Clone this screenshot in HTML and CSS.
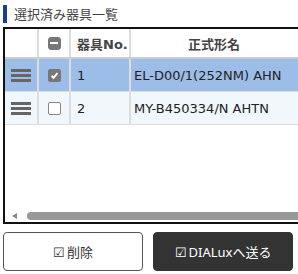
FILE: index.html
```html
<!DOCTYPE html>
<html lang="ja">
<head>
    <meta charset="UTF-8">
    <title>選択済み器具一覧</title>
    <link rel="stylesheet" href="styles.css">
</head>
<body>
    <div class="panel">
        <div class="panel-title">選択済み器具一覧</div>
        <div class="grid-box">
            <div class="grid-row grid-head">
                <div class="cell c-drag"></div>
                <div class="cell c-check"><span class="box partial"></span></div>
                <div class="cell c-no">器具No.</div>
                <div class="cell c-name head-name">正式形名</div>
            </div>
            <div class="grid-row selected">
                <div class="cell c-drag"><span class="handle"></span></div>
                <div class="cell c-check"><span class="box checked">
                    <svg width="13" height="13" viewBox="0 0 13 13"><path d="M3 6.8 L5.4 9.2 L10 3.8" fill="none" stroke="#fff" stroke-width="2.2"/></svg>
                </span></div>
                <div class="cell c-no">1</div>
                <div class="cell c-name">EL-D00/1(252NM) AHN</div>
            </div>
            <div class="grid-row">
                <div class="cell c-drag"><span class="handle"></span></div>
                <div class="cell c-check"><span class="box"></span></div>
                <div class="cell c-no">2</div>
                <div class="cell c-name">MY-B450334/N AHTN</div>
            </div>
            <div class="grid-fill"></div>
            <div class="hscroll">
                <span class="arrow-left"></span>
                <span class="thumb"></span>
            </div>
        </div>
        <div class="actions">
            <button class="btn btn-light"><span class="ico">☑</span>削除</button>
            <button class="btn btn-dark"><span class="ico">☑</span>DIALuxへ送る</button>
        </div>
    </div>
</body>
</html>
```

FILE: styles.css
```css
body {
    margin: 0;
    padding: 0;
    font-family: "Noto Sans", "Noto Sans CJK JP", sans-serif;
    color: #333;
    background-color: white;
    overflow: hidden;
}
.panel {
    width: 298px;
    height: 274px;
    display: flex;
    flex-direction: column;
    overflow: hidden;
}
.panel-title {
    margin: 5px 0 0 3px;
    height: 18px;
    border-left: 4px solid #1b3f8b;
    padding-left: 7px;
    font-size: 13px;
    line-height: 18px;
    color: #444;
}
.grid-box {
    margin: 4px 0 0 3px;
    width: 295px;
    height: 193px;
    border-top: 2px solid #111;
    border-left: 2px solid #111;
    border-bottom: 2px solid #111;
    display: flex;
    flex-direction: column;
    overflow: hidden;
}
.grid-row {
    display: flex;
    flex-shrink: 0;
    width: 320px;
    height: 32px;
    border-bottom: 1px solid #ddd;
    background-color: #f0f7fd;
}
.grid-head {
    height: 28px;
    background-color: white;
    border-bottom: 2px solid #ccc;
}
.selected {
    background-color: #9dbde9;
}
.cell {
    display: flex;
    align-items: center;
    font-family: "DejaVu Sans", "Noto Sans CJK JP", sans-serif;
    font-size: 13px;
    color: #222;
    border-right: 2px solid #ddd;
    box-sizing: border-box;
}
.c-drag {
    width: 34px;
    justify-content: center;
}
.c-check {
    width: 32px;
    justify-content: center;
}
.c-no {
    width: 60px;
    padding-left: 6px;
}
.c-name {
    width: 194px;
    padding-left: 3px;
    white-space: nowrap;
    border-right: none;
}
.grid-head .cell {
    font-weight: bold;
    color: #444;
}
.head-name {
    padding-left: 57px;
}
.handle {
    width: 20px;
    height: 3px;
    background-color: #666;
    box-shadow: 0 -5px 0 #666, 0 5px 0 #666;
}
.box {
    width: 11px;
    height: 11px;
    border: 1px solid #888;
    border-radius: 2px;
    background-color: white;
    display: flex;
    align-items: center;
    justify-content: center;
}
.box.checked {
    background-color: #777;
    border-color: #777;
}
.box.partial {
    background-color: #777;
    border-color: #777;
    border-radius: 3px;
}
.box.partial::after {
    content: "";
    width: 8px;
    height: 2px;
    background-color: white;
}
.grid-fill {
    flex-grow: 1;
}
.hscroll {
    height: 9px;
    margin-bottom: 2px;
    display: flex;
    align-items: center;
}
.arrow-left {
    margin-left: 7px;
    width: 0;
    height: 0;
    border-top: 3px solid transparent;
    border-bottom: 3px solid transparent;
    border-right: 5px solid #888;
}
.thumb {
    margin-left: 10px;
    flex-grow: 1;
    height: 8px;
    border-radius: 4px 0 0 4px;
    background-color: #999;
}
.actions {
    display: flex;
    gap: 10px;
    margin: 8px 0 0 3px;
}
.btn {
    width: 140px;
    height: 39px;
    border-radius: 4px;
    font-family: "Noto Sans", "Noto Sans CJK JP", sans-serif;
    font-size: 13px;
    display: flex;
    align-items: center;
    justify-content: center;
    cursor: pointer;
}
.btn-light {
    background-color: white;
    border: 1px solid #555;
    color: #333;
}
.btn-dark {
    background-color: #333;
    border: 1px solid #333;
    color: white;
}
.ico {
    font-size: 13px;
    margin-right: 2px;
}
```
